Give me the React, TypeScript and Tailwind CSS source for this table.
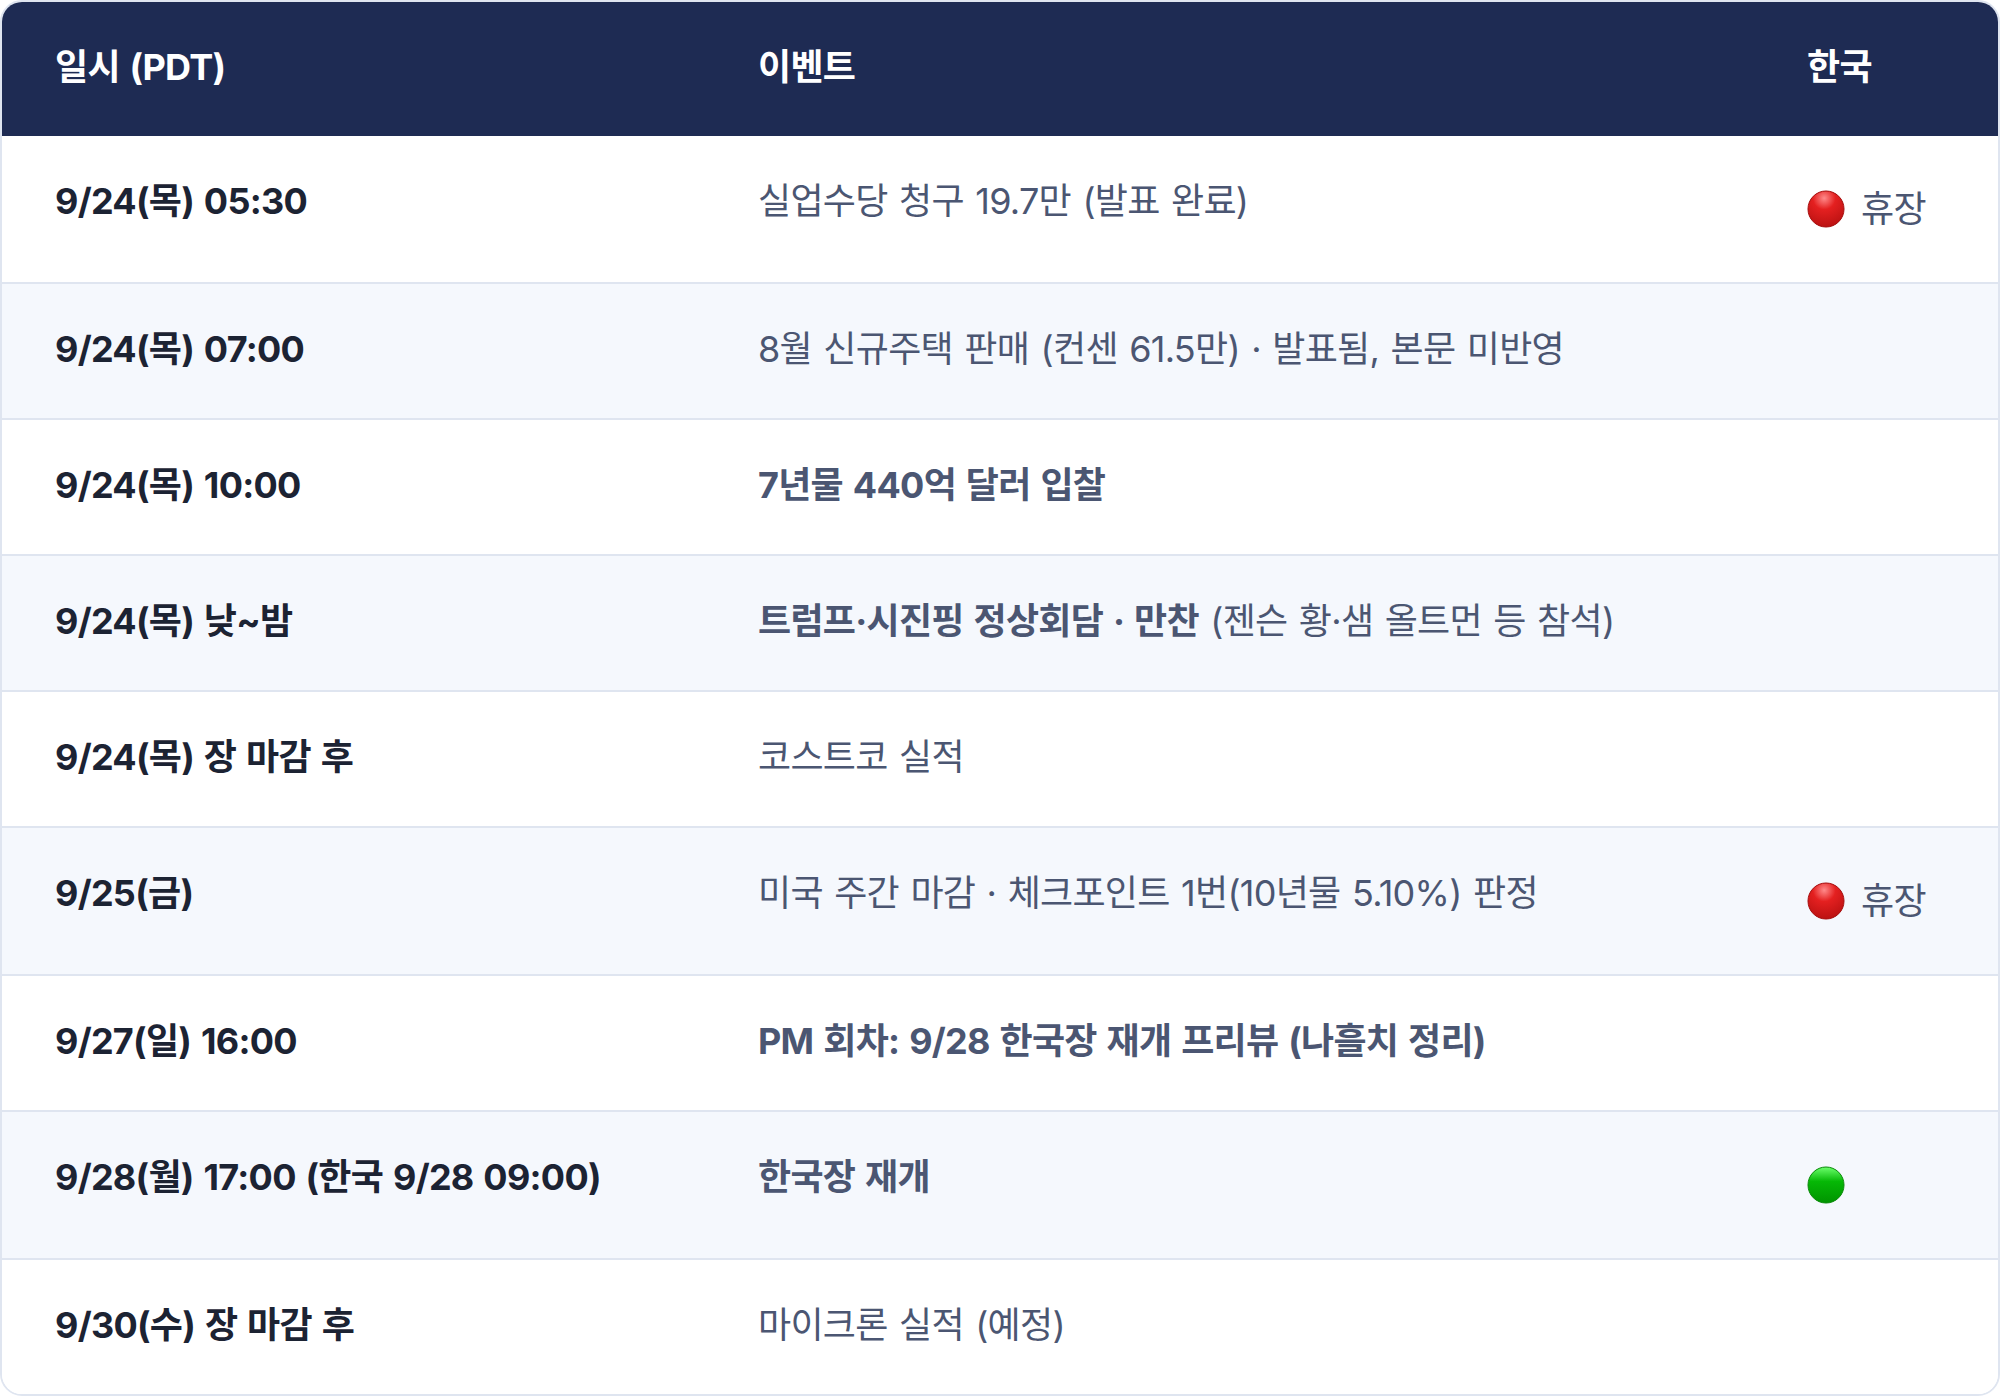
import React from "react";

type Status = "closed" | "open" | null;

type Row = {
  when: string;
  event: React.ReactNode;
  korea: Status;
};

const rows: Row[] = [
  { when: "9/24(목) 05:30", event: "실업수당 청구 19.7만 (발표 완료)", korea: "closed" },
  { when: "9/24(목) 07:00", event: "8월 신규주택 판매 (컨센 61.5만) · 발표됨, 본문 미반영", korea: null },
  { when: "9/24(목) 10:00", event: <span className="font-bold">7년물 440억 달러 입찰</span>, korea: null },
  {
    when: "9/24(목) 낮~밤",
    event: (
      <>
        <span className="font-bold">트럼프·시진핑 정상회담 · 만찬</span> (젠슨 황·샘 올트먼 등 참석)
      </>
    ),
    korea: null,
  },
  { when: "9/24(목) 장 마감 후", event: "코스트코 실적", korea: null },
  { when: "9/25(금)", event: "미국 주간 마감 · 체크포인트 1번(10년물 5.10%) 판정", korea: "closed" },
  { when: "9/27(일) 16:00", event: <span className="font-bold">PM 회차: 9/28 한국장 재개 프리뷰 (나흘치 정리)</span>, korea: null },
  { when: "9/28(월) 17:00 (한국 9/28 09:00)", event: <span className="font-bold">한국장 재개</span>, korea: "open" },
  { when: "9/30(수) 장 마감 후", event: "마이크론 실적 (예정)", korea: null },
];

const RedDot = () => (
  <svg width="38" height="38" viewBox="0 0 38 38">
    <defs>
      <radialGradient id="red-g" cx="0.45" cy="0.2" r="0.9">
        <stop offset="0" stopColor="#ff8a8a" />
        <stop offset="0.35" stopColor="#e42020" />
        <stop offset="1" stopColor="#b30f0f" />
      </radialGradient>
    </defs>
    <circle cx="19" cy="19" r="18" fill="url(#red-g)" stroke="#a50d0d" strokeWidth="1" />
  </svg>
);

const GreenDot = () => (
  <svg width="38" height="38" viewBox="0 0 38 38">
    <defs>
      <linearGradient id="green-g" x1="0" y1="0" x2="0" y2="1">
        <stop offset="0" stopColor="#6cff6c" />
        <stop offset="0.4" stopColor="#06b806" />
        <stop offset="1" stopColor="#009400" />
      </linearGradient>
    </defs>
    <circle cx="19" cy="19" r="18" fill="url(#green-g)" stroke="#0a8a0a" strokeWidth="1" />
  </svg>
);

const KoreaCell = ({ status }: { status: Status }) => {
  if (!status) return null;
  return (
    <div className="flex h-[66px] items-center gap-[16px]">
      {status === "closed" ? <RedDot /> : <GreenDot />}
      {status === "closed" && <span className="text-[#4b5672]">휴장</span>}
    </div>
  );
};

const App = () => {
  return (
    <div
      className="min-h-[1396px] w-[2000px] bg-white"
      style={{ fontFamily: "Inter, 'Noto Sans CJK KR', sans-serif" }}
    >
      <div className="overflow-hidden rounded-[22px] border-2 border-[#dfe5f0]">
        <table className="w-full table-fixed border-collapse text-[36px] leading-[54px] tracking-[-0.02em] [word-spacing:2px]">
          <colgroup>
            <col className="w-[703px]" />
            <col className="w-[1049px]" />
            <col />
          </colgroup>
          <thead>
            <tr className="bg-[#1e2b53] text-left text-white">
              <th className="px-[53px] pt-[38px] pb-[42px] font-bold">일시 (PDT)</th>
              <th className="px-[53px] pt-[38px] pb-[42px] font-bold">이벤트</th>
              <th className="px-[53px] pt-[38px] pb-[42px] font-bold">한국</th>
            </tr>
          </thead>
          <tbody>
            {rows.map((r, i) => (
              <tr
                key={i}
                className={`${i % 2 === 1 ? "bg-[#f5f8fd]" : "bg-white"} ${
                  i < rows.length - 1 ? "border-b-2 border-[#dfe5f0]" : ""
                }`}
              >
                <td className="px-[53px] pt-[38px] pb-[42px] align-top font-bold text-[#1c2333]">{r.when}</td>
                <td className="px-[53px] pt-[38px] pb-[42px] align-top text-[#4b5672]">{r.event}</td>
                <td className="px-[53px] py-[40px] align-middle">
                  <KoreaCell status={r.korea} />
                </td>
              </tr>
            ))}
          </tbody>
        </table>
      </div>
    </div>
  );
};

export default App;
